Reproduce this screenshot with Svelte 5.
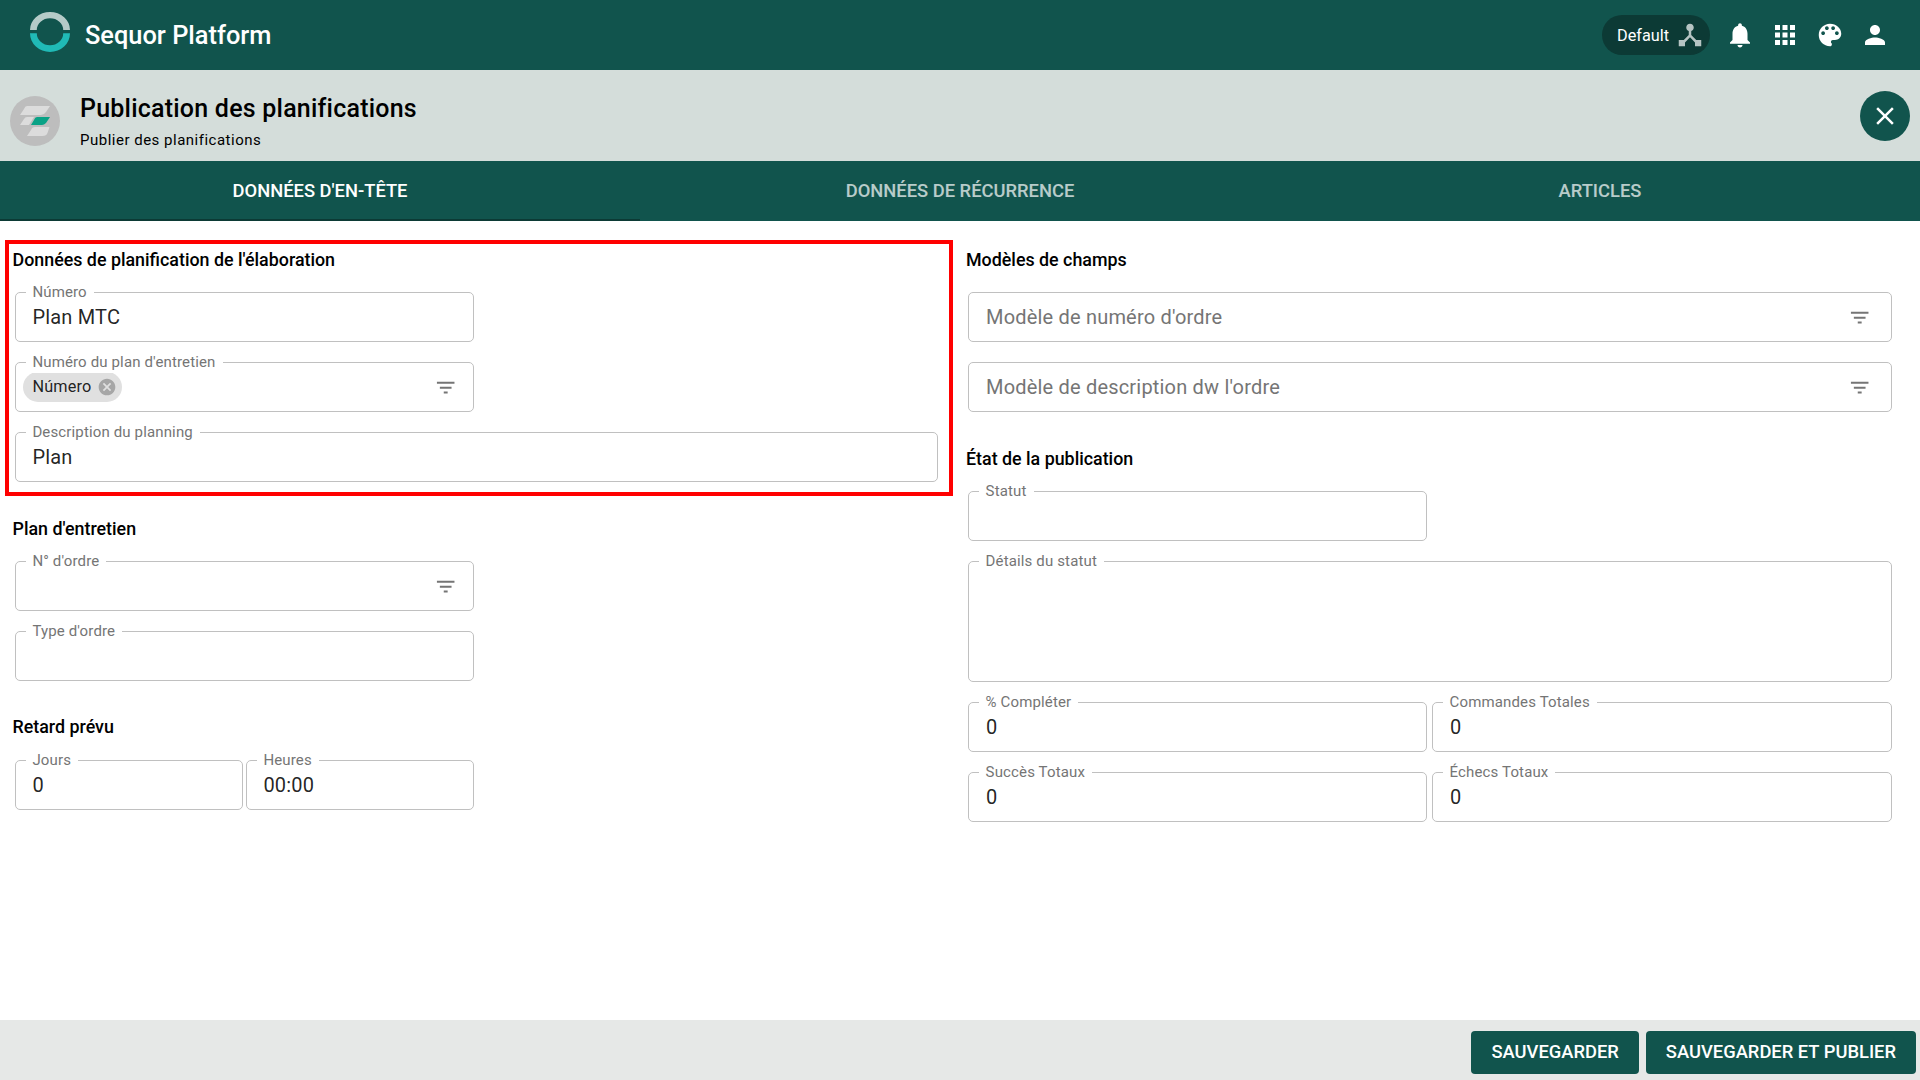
<script>
    // Material icon paths, 24x24 grid
    const icons = {
        hub: "M17 16l-4-4V8.82C14.16 8.4 15 7.3 15 6c0-1.66-1.34-3-3-3S9 4.34 9 6c0 1.3.84 2.4 2 2.82V12l-4 4H3v5h5v-3.05l4-4.2 4 4.2V21h5v-5h-4z",
        bell: "M12 22c1.1 0 2-.9 2-2h-4c0 1.1.89 2 2 2zm6-6v-5c0-3.07-1.64-5.64-4.5-6.32V4c0-.83-.67-1.5-1.5-1.5s-1.5.67-1.5 1.5v.68C7.63 5.36 6 7.92 6 11v5l-2 2v1h16v-1l-2-2z",
        apps: "M4 8h4V4H4v4zm6 12h4v-4h-4v4zm-6 0h4v-4H4v4zm0-6h4v-4H4v4zm6 0h4v-4h-4v4zm6-10v4h4V4h-4zm-6 4h4V4h-4v4zm6 6h4v-4h-4v4zm0 6h4v-4h-4v4z",
        palette:
            "M12 3c-4.97 0-9 4.03-9 9s4.03 9 9 9c.83 0 1.5-.67 1.5-1.5 0-.39-.15-.74-.39-1.01-.23-.26-.38-.61-.38-.99 0-.83.67-1.5 1.5-1.5H16c2.76 0 5-2.24 5-5 0-4.42-4.03-8-9-8zm-5.5 9c-.83 0-1.5-.67-1.5-1.5S5.67 9 6.5 9 8 9.67 8 10.5 7.33 12 6.5 12zm3-4C8.67 8 8 7.33 8 6.5S8.67 5 9.5 5s1.5.67 1.5 1.5S10.33 8 9.5 8zm5 0c-.83 0-1.5-.67-1.5-1.5S13.67 5 14.5 5s1.5.67 1.5 1.5S15.33 8 14.5 8zm3 4c-.83 0-1.5-.67-1.5-1.5S16.67 9 17.5 9s1.5.67 1.5 1.5-.67 1.5-1.5 1.5z",
        person: "M12 12c2.21 0 4-1.79 4-4s-1.79-4-4-4-4 1.79-4 4 1.79 4 4 4zm0 2c-2.67 0-8 1.34-8 4v2h16v-2c0-2.66-5.33-4-8-4z",
        close: "M19 6.41L17.59 5 12 10.59 6.41 5 5 6.41 10.59 12 5 17.59 6.41 19 12 13.41 17.59 19 19 17.59 13.41 12z",
        filter: "M10 18h4v-2h-4v2zM3 6v2h18V6H3zm3 7h12v-2H6v2z",
        cancel: "M12 2C6.47 2 2 6.47 2 12s4.47 10 10 10 10-4.47 10-10S17.53 2 12 2zm5 13.59L15.59 17 12 13.41 8.41 17 7 15.59 10.59 12 7 8.41 8.41 7 12 10.59 15.59 7 17 8.41 13.41 12 17 15.59z",
    };

    const tabs = ["Données d'en-tête", "Données de récurrence", "Articles"];
    let activeTab = $state(0);

    const actions = ["bell", "apps", "palette", "person"];

    const leftSections = [
        {
            title: "Données de planification de l'élaboration",
            highlight: true,
            rows: [
                [{ label: "Número", value: "Plan MTC", size: "half" }],
                [
                    {
                        label: "Numéro du plan d'entretien",
                        chip: "Número",
                        filter: true,
                        size: "half",
                    },
                ],
                [{ label: "Description du planning", value: "Plan" }],
            ],
        },
        {
            title: "Plan d'entretien",
            rows: [
                [{ label: "N° d'ordre", filter: true, size: "half" }],
                [{ label: "Type d'ordre", size: "half" }],
            ],
        },
        {
            title: "Retard prévu",
            rows: [
                [
                    { label: "Jours", value: "0", size: "quarter" },
                    { label: "Heures", value: "00:00", size: "quarter" },
                ],
            ],
        },
    ];

    const rightSections = [
        {
            title: "Modèles de champs",
            rows: [
                [{ placeholder: "Modèle de numéro d'ordre", filter: true }],
                [
                    {
                        placeholder: "Modèle de description dw l'ordre",
                        filter: true,
                    },
                ],
            ],
        },
        {
            title: "État de la publication",
            rows: [
                [{ label: "Statut", size: "half" }],
                [{ label: "Détails du statut", tall: true }],
                [
                    { label: "% Compléter", value: "0", size: "half" },
                    { label: "Commandes Totales", value: "0", size: "rest" },
                ],
                [
                    { label: "Succès Totaux", value: "0", size: "half" },
                    { label: "Échecs Totaux", value: "0", size: "rest" },
                ],
            ],
        },
    ];
</script>

{#snippet icon(name)}
    <svg class="icon {name}" viewBox="0 0 24 24"><path d={icons[name]} /></svg>
{/snippet}

{#snippet field(f)}
    <div class="field {f.size ?? ''}" class:tall={f.tall}>
        {#if f.label}
            <span class="label">{f.label}</span>
        {/if}
        {#if f.chip}
            <span class="chip"><span>{f.chip}</span>{@render icon("cancel")}</span>
        {/if}
        <span class="value" class:placeholder={f.placeholder}
            >{f.value ?? f.placeholder ?? ""}</span
        >
        {#if f.filter}
            {@render icon("filter")}
        {/if}
    </div>
{/snippet}

{#snippet section(s)}
    <section class:highlight={s.highlight}>
        <h2>{s.title}</h2>
        {#each s.rows as row}
            <div class="row" class:tight={row[0].size === "quarter"}>
                {#each row as f}
                    {@render field(f)}
                {/each}
            </div>
        {/each}
    </section>
{/snippet}

<div class="page">
    <header class="topbar">
        <svg class="logo" viewBox="0 0 40 40">
            <path d="M0 18a20 18 0 0 1 40 0h-6.8a13.2 11.8 0 0 0-26.4 0z" fill="#b5cbc8" />
            <path d="M0 21.3a20 18.7 0 0 0 40 0h-6.8a13.2 12 0 0 1-26.4 0z" fill="#20bab6" />
        </svg>
        <span class="brand">Sequor Platform</span>
        <div class="actions">
            <span class="env">Default{@render icon("hub")}</span>
            {#each actions as name}
                {@render icon(name)}
            {/each}
        </div>
    </header>

    <div class="subheader">
        <svg class="avatar" viewBox="0 0 50 50">
            <circle cx="25" cy="25" r="25" fill="#bdbdbd" />
            <path d="M17 10h23l-4 6q-2 3-5 3H10l4-6q1-3 3-3z" fill="#dcdcdc" />
            <path d="M17 21h7l-5 8H10l4-6q1-2 3-2z" fill="#dcdcdc" />
            <path d="M27 21h13l-4 6q-2 2-4 2H21l3-5q1-3 3-3z" fill="#0aa286" />
            <path d="M25 31h14.5l-2 6q-1 3-5 3H17l4-6q1-3 4-3z" fill="#dcdcdc" />
        </svg>
        <div class="titles">
            <h1>Publication des planifications</h1>
            <p>Publier des planifications</p>
        </div>
        <button class="btn-close" aria-label="Fermer">{@render icon("close")}</button>
    </div>

    <nav class="tabs">
        {#each tabs as tab, i}
            <button class:active={i === activeTab} onclick={() => (activeTab = i)}>
                <span>{tab}</span>
            </button>
        {/each}
    </nav>

    <main>
        <div class="column left">
            {#each leftSections as s}
                {@render section(s)}
            {/each}
        </div>
        <div class="column right">
            {#each rightSections as s}
                {@render section(s)}
            {/each}
        </div>
    </main>

    <footer>
        <button class="btn">Sauvegarder</button>
        <button class="btn">Sauvegarder et publier</button>
    </footer>
</div>

<style>
    :global(body) {
        margin: 0;
        background: #fff;
    }

    .page {
        --primary: #11544d;
        display: flex;
        flex-direction: column;
        height: 1080px;
        overflow: hidden;
        font-family: Roboto, sans-serif;
        color: rgba(0, 0, 0, 0.87);
    }

    .page * {
        box-sizing: border-box;
    }

    button {
        border: none;
        padding: 0;
        font-family: inherit;
        cursor: pointer;
    }

    .icon {
        display: block;
        flex: none;
        width: 30px;
        height: 30px;
        fill: currentColor;
    }

    .topbar {
        display: flex;
        align-items: center;
        height: 70px;
        padding: 0 30px;
        background: var(--primary);
        color: #fff;
    }

    .logo {
        width: 40px;
        height: 40px;
        margin-bottom: 6px;
    }

    .brand {
        margin-left: 15px;
        font-size: 25.4px;
        font-weight: 500;
        line-height: 40px;
    }

    .actions {
        display: flex;
        align-items: center;
        gap: 15px;
        margin-left: auto;
    }

    .env {
        display: flex;
        align-items: center;
        justify-content: space-between;
        width: 108px;
        height: 40px;
        padding: 0 5px 0 15px;
        border-radius: 20px;
        background: #0c3a35;
        font-size: 16.25px;
    }

    .env .icon {
        opacity: 0.7;
    }

    .subheader {
        display: flex;
        height: 91px;
        padding: 21px 10px 0;
        background: #d4ddda;
        color: #000;
    }

    .avatar {
        width: 50px;
        height: 50px;
        margin-top: 5px;
    }

    .titles {
        margin-left: 20px;
    }

    h1 {
        margin: -2px 0 0;
        font-size: 25px;
        font-weight: 500;
        line-height: 40px;
        letter-spacing: 0.22px;
    }

    .titles p {
        margin: -1px 0 0;
        font-size: 15px;
        line-height: 24px;
        letter-spacing: 0.5px;
    }

    .btn-close {
        display: flex;
        align-items: center;
        justify-content: center;
        width: 50px;
        height: 50px;
        margin-left: auto;
        border-radius: 50%;
        background: var(--primary);
        color: #fff;
    }

    .tabs {
        display: flex;
        height: 60px;
        background: var(--primary);
    }

    .tabs button {
        flex: 1;
        border-bottom: 2px solid transparent;
        background: none;
        color: #fff;
        font-size: 18.35px;
        font-weight: 500;
        text-transform: uppercase;
    }

    .tabs button span {
        opacity: 0.7;
    }

    .tabs .active {
        border-color: #0c3a35;
    }

    .tabs .active span {
        opacity: 1;
    }

    main {
        display: flex;
        flex: 1;
        padding-top: 19px;
    }

    .column {
        display: flex;
        flex-direction: column;
    }

    .left {
        width: 948px;
        margin-left: 5px;
    }

    .right {
        width: 939px;
        padding-top: 4px;
    }

    section {
        padding: 0 11px 0 10px;
    }

    section.highlight {
        margin-bottom: 6px;
        padding: 0 11px 10px 6px;
        border: 4px solid #f00;
    }

    .right section {
        padding: 0 0 0 15px;
    }

    h2 {
        height: 48px;
        margin: 0 0 0 -2.5px;
        padding-top: 4px;
        color: #000;
        font-size: 17.85px;
        font-weight: 500;
        line-height: 24px;
    }

    .right h2 {
        margin-left: -2px;
    }

    section + section h2 {
        height: 59px;
        padding-top: 15px;
    }

    section:nth-child(3) h2 {
        padding-top: 14px;
    }

    .row {
        display: flex;
        gap: 5px;
        margin-bottom: 20px;
    }

    .row.tight {
        gap: 3px;
    }

    .highlight .row:last-child {
        margin-bottom: 0;
    }

    .field {
        position: relative;
        display: flex;
        align-items: center;
        width: 924px;
        height: 50px;
        padding: 0 15.8px 0 16.4px;
        border: 1px solid #c0c0c0;
        border-radius: 5px;
    }

    .right .field {
        padding: 0 20px 0 17px;
    }

    .field.half {
        width: 459px;
    }

    .field.rest {
        width: 460px;
    }

    .field.quarter {
        width: 228px;
    }

    .field.tall {
        height: 121px;
    }

    /* sits on the outline and cuts the notch */
    .label {
        position: absolute;
        top: -12px;
        left: 10px;
        padding: 0 7px 0 6.4px;
        background: #fff;
        color: #757575;
        font-size: 15px;
        line-height: 22px;
        letter-spacing: 0.14px;
        white-space: nowrap;
    }

    .right .label {
        padding-left: 6.6px;
    }

    .value {
        flex: 1;
        font-size: 20px;
        line-height: 24px;
        letter-spacing: 0.19px;
    }

    .placeholder {
        color: #757575;
    }

    .icon.filter {
        width: 23.4px;
        height: 23.4px;
        margin-top: 1px;
        color: #757575;
    }

    .chip {
        display: flex;
        align-items: center;
        gap: 6px;
        height: 30px;
        margin-left: -9.4px;
        padding: 0 5px 0 9.4px;
        border-radius: 15px;
        background: #e0e0e0;
        font-size: 16.25px;
        letter-spacing: 0.15px;
    }

    .chip span {
        padding-bottom: 2px;
    }

    .icon.cancel {
        width: 20px;
        height: 20px;
        color: #a6a6a6;
    }

    footer {
        display: flex;
        justify-content: flex-end;
        gap: 7px;
        height: 60px;
        padding: 11px 4px 0;
        background: #e6e8e7;
    }

    .btn {
        height: 43px;
        padding: 0 20px 2px;
        border-radius: 4px;
        background: var(--primary);
        color: #fff;
        font-size: 18.35px;
        font-weight: 500;
        text-transform: uppercase;
    }
</style>
